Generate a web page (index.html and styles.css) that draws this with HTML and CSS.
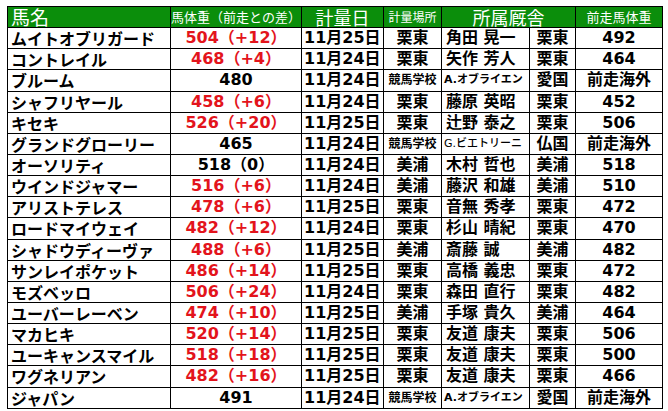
FILE: index.html
```
<!DOCTYPE html>
<html lang="ja">
<head>
<meta charset="utf-8">
<link rel="stylesheet" href="styles.css">
</head>
<body>
<table class="tbl">
<colgroup>
<col class="c1"><col class="c2"><col class="c3"><col class="c4"><col class="c5"><col class="c6"><col class="c7">
</colgroup>
<thead>
<tr class="hd">
<th class="h-name">馬名</th>
<th class="h-sm">馬体重（前走との差）</th>
<th class="h-lg">計量日</th>
<th class="h-xs">計量場所</th>
<th class="h-lg" colspan="2">所属厩舎</th>
<th class="h-sm">前走馬体重</th>
</tr>
</thead>
<tbody>
<tr><td class="nm">ムイトオブリガード</td><td class="wt up">504（+12）</td><td class="dt">11月25日</td><td class="ct">栗東</td><td class="tr">角田 晃一</td><td class="ct">栗東</td><td class="ct">492</td></tr>
<tr><td class="nm">コントレイル</td><td class="wt up">468（+4）</td><td class="dt">11月24日</td><td class="ct">栗東</td><td class="tr">矢作 芳人</td><td class="ct">栗東</td><td class="ct">464</td></tr>
<tr><td class="nm">ブルーム</td><td class="wt">480</td><td class="dt">11月24日</td><td class="ct sm">競馬学校</td><td class="tr sm2">A.オブライエン</td><td class="ct">愛国</td><td class="ct">前走海外</td></tr>
<tr><td class="nm">シャフリヤール</td><td class="wt up">458（+6）</td><td class="dt">11月24日</td><td class="ct">栗東</td><td class="tr">藤原 英昭</td><td class="ct">栗東</td><td class="ct">452</td></tr>
<tr><td class="nm">キセキ</td><td class="wt up">526（+20）</td><td class="dt">11月25日</td><td class="ct">栗東</td><td class="tr">辻野 泰之</td><td class="ct">栗東</td><td class="ct">506</td></tr>
<tr><td class="nm">グランドグローリー</td><td class="wt">465</td><td class="dt">11月24日</td><td class="ct sm">競馬学校</td><td class="tr sm2 lt">G.ビエトリーニ</td><td class="ct">仏国</td><td class="ct">前走海外</td></tr>
<tr><td class="nm">オーソリティ</td><td class="wt">518（0）</td><td class="dt">11月24日</td><td class="ct">美浦</td><td class="tr">木村 哲也</td><td class="ct">美浦</td><td class="ct">518</td></tr>
<tr><td class="nm">ウインドジャマー</td><td class="wt up">516（+6）</td><td class="dt">11月24日</td><td class="ct">美浦</td><td class="tr">藤沢 和雄</td><td class="ct">美浦</td><td class="ct">510</td></tr>
<tr><td class="nm">アリストテレス</td><td class="wt up">478（+6）</td><td class="dt">11月25日</td><td class="ct">栗東</td><td class="tr">音無 秀孝</td><td class="ct">栗東</td><td class="ct">472</td></tr>
<tr><td class="nm">ロードマイウェイ</td><td class="wt up">482（+12）</td><td class="dt">11月24日</td><td class="ct">栗東</td><td class="tr">杉山 晴紀</td><td class="ct">栗東</td><td class="ct">470</td></tr>
<tr><td class="nm">シャドウディーヴァ</td><td class="wt up">488（+6）</td><td class="dt">11月25日</td><td class="ct">美浦</td><td class="tr">斎藤 誠</td><td class="ct">美浦</td><td class="ct">482</td></tr>
<tr><td class="nm">サンレイポケット</td><td class="wt up">486（+14）</td><td class="dt">11月25日</td><td class="ct">栗東</td><td class="tr">高橋 義忠</td><td class="ct">栗東</td><td class="ct">472</td></tr>
<tr><td class="nm">モズベッロ</td><td class="wt up">506（+24）</td><td class="dt">11月24日</td><td class="ct">栗東</td><td class="tr">森田 直行</td><td class="ct">栗東</td><td class="ct">482</td></tr>
<tr><td class="nm">ユーバーレーベン</td><td class="wt up">474（+10）</td><td class="dt">11月25日</td><td class="ct">美浦</td><td class="tr">手塚 貴久</td><td class="ct">美浦</td><td class="ct">464</td></tr>
<tr><td class="nm">マカヒキ</td><td class="wt up">520（+14）</td><td class="dt">11月25日</td><td class="ct">栗東</td><td class="tr">友道 康夫</td><td class="ct">栗東</td><td class="ct">506</td></tr>
<tr><td class="nm">ユーキャンスマイル</td><td class="wt up">518（+18）</td><td class="dt">11月25日</td><td class="ct">栗東</td><td class="tr">友道 康夫</td><td class="ct">栗東</td><td class="ct">500</td></tr>
<tr><td class="nm">ワグネリアン</td><td class="wt up">482（+16）</td><td class="dt">11月25日</td><td class="ct">栗東</td><td class="tr">友道 康夫</td><td class="ct">栗東</td><td class="ct">466</td></tr>
<tr><td class="nm">ジャパン</td><td class="wt">491</td><td class="dt">11月24日</td><td class="ct sm">競馬学校</td><td class="tr sm2">A.オブライエン</td><td class="ct">愛国</td><td class="ct">前走海外</td></tr>
</tbody>
</table>
</body>
</html>
```
FILE: styles.css
```
html, body {
  margin: 0;
  padding: 0;
  background: #ffffff;
}
body {
  padding: 6px 0 0 7px;
  font-family: "DejaVu Sans", "Noto Sans CJK JP", sans-serif;
  color: #000;
}
.tbl {
  border-collapse: collapse;
  table-layout: fixed;
  width: 655px;
}
.c1 { width: 163px; }
.c2 { width: 131px; }
.c3 { width: 82px; }
.c4 { width: 58px; }
.c5 { width: 88px; }
.c6 { width: 46px; }
.c7 { width: 87px; }
.tbl th, .tbl td {
  border: 1px solid #000;
  padding: 0;
  height: 20.15px;
  line-height: 20px;
  white-space: nowrap;
}
.hd th {
  background: #0b8e0b;
  color: #fff;
  font-family: "Noto Sans CJK JP", sans-serif;
  font-weight: normal;
  text-align: center;
}
.hd .h-name {
  text-align: left;
  font-size: 19px;
  padding-left: 3px;
}
.hd .h-sm { font-size: 13px; }
.hd .h-xs { font-size: 12px; }
.hd .h-lg { font-size: 18px; }
.tbl td {
  font-size: 16px;
  font-weight: bold;
}
.nm {
  padding-left: 3px !important;
  text-align: left;
  font-family: "Noto Sans CJK JP", sans-serif;
}
.wt { text-align: center; }
.up { color: #e3141c; }
.dt { text-align: left; padding-left: 2px !important; }
.ct { text-align: center; }
.tr { text-align: left; padding-left: 4px !important; }
.sm { font-size: 12px !important; }
.sm2 { font-size: 11px !important; padding-left: 2px !important; }
.lt { font-weight: 500 !important; }
```
